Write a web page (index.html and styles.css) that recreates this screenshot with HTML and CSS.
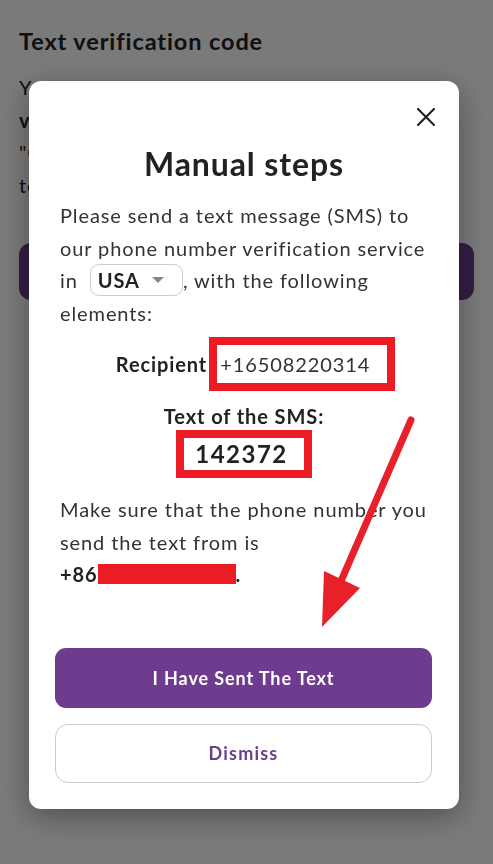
FILE: index.html
```html
<!DOCTYPE html>
<html lang="en">

<head>
    <meta charset="UTF-8">
    <meta name="viewport" content="width=device-width, initial-scale=1.0">
    <title>Manual steps</title>
    <link rel="stylesheet" href="styles.css">
</head>

<body>

    <div class="page">
        <h2>Text verification code</h2>
        <p>You will now need to send a text to<br><b>verify your phone number</b>. Tap<br>"Get manual steps" and send it<br>to our service.</p>
        <button class="page-btn">Get manual steps</button>
    </div>

    <div class="overlay">
        <div class="modal">
            <button class="close" aria-label="Close">
                <svg width="18" height="18" viewBox="0 0 18 18">
                    <path d="M1 1 L17 17 M17 1 L1 17" stroke="#222" stroke-width="2.2" stroke-linecap="round" />
                </svg>
            </button>

            <h1>Manual steps</h1>

            <p class="intro">Please send a text message (SMS) to our phone number verification service in
                <span class="select">USA<span class="caret"></span></span>, with the following elements:</p>

            <div class="recipient">
                <b>Recipient</b><span class="mark number">+16508220314</span>
            </div>

            <div class="sms">
                <b>Text of the SMS:</b>
                <span class="mark code">142372</span>
            </div>

            <p class="from">Make sure that the phone number you send the text from is
                <b class="phone">+86<span class="redact"></span>.</b></p>

            <div class="actions">
                <button class="btn primary">I Have Sent The Text</button>
                <button class="btn secondary">Dismiss</button>
            </div>
        </div>
    </div>

    <!-- annotation arrow drawn over the screenshot -->
    <svg class="arrow" width="493" height="864" viewBox="0 0 493 864">
        <line x1="411" y1="420" x2="338" y2="588" stroke="#e8202a" stroke-width="7" stroke-linecap="round" />
        <polygon points="322,627 324,571 360,588" fill="#e8202a" />
    </svg>

</body>

</html>
```

FILE: styles.css
```css
body {
    font-family: Lato, "Open Sans", sans-serif;
    letter-spacing: 0.9px;
    background-color: #fff;
    color: #222;
    margin: 0;
    padding: 0;
    width: 493px;
    height: 864px;
    overflow: hidden;
}

.page {
    padding: 26px 19px;
}

.page h2 {
    font-size: 23.5px;
    line-height: 30px;
    margin: 0 0 15px;
}

.page p {
    font-size: 20px;
    line-height: 32.5px;
    margin: 0 0 42px;
    white-space: nowrap;
}

.page-btn {
    width: 100%;
    height: 57px;
    border: none;
    border-radius: 12px;
    background-color: #6f3b8e;
    color: #fff;
    font-family: inherit;
    font-size: 18px;
}

.overlay {
    position: fixed;
    top: 0;
    left: 0;
    right: 0;
    bottom: 0;
    background-color: rgba(0, 0, 0, 0.52);
    padding: 81px 34px 0 29px;
}

.modal {
    position: relative;
    background-color: #fff;
    border-radius: 12px;
    padding: 63px 31px 26px;
    box-shadow: 0 8px 30px rgba(0, 0, 0, 0.35);
    text-align: center;
}

.close {
    position: absolute;
    top: 27px;
    right: 24px;
    background: none;
    border: none;
    padding: 0;
    width: 18px;
    height: 18px;
}

.modal h1 {
    font-size: 32px;
    line-height: 40px;
    margin: 0 0 15px;
    color: #222;
}

.intro,
.from {
    font-size: 20px;
    line-height: 32.5px;
    margin: 0;
    text-align: left;
    color: #333;
}

.select {
    display: inline-flex;
    align-items: center;
    gap: 12px;
    border: 1px solid #ccc;
    border-radius: 9px;
    padding: 0 18px 0 7px;
    height: 32px;
    box-sizing: border-box;
    font-weight: 700;
    color: #222;
    margin-left: 6px;
}

.caret {
    width: 0;
    height: 0;
    border-left: 6px solid transparent;
    border-right: 6px solid transparent;
    border-top: 6px solid #888;
}

.recipient {
    margin-top: 8px;
    margin-left: 23px;
    font-size: 20px;
    display: flex;
    justify-content: center;
    align-items: center;
    color: #222;
}

.mark {
    border: 8px solid #ec1c24;
    display: inline-block;
}

.number {
    line-height: 38px;
    padding: 0 17px 0 3px;
    margin-left: 2px;
    color: #333;
}

.sms {
    margin-top: 11px;
    font-size: 20px;
    line-height: 28px;
    display: flex;
    flex-direction: column;
    align-items: center;
    color: #222;
}

.code {
    font-size: 24px;
    line-height: 32px;
    font-weight: 700;
    letter-spacing: 1.5px;
    padding: 0 16px 0 11px;
}

.from {
    margin-top: 15px;
}

.phone {
    color: #222;
    white-space: nowrap;
}

.redact {
    display: inline-block;
    width: 138px;
    height: 20px;
    background-color: #ec1c24;
    vertical-align: -2px;
}

.actions {
    margin-top: 57px;
    display: flex;
    flex-direction: column;
    gap: 16px;
    margin-left: -5px;
    margin-right: -4px;
}

.btn {
    height: 60px;
    border-radius: 11px;
    font-family: inherit;
    font-size: 18px;
    font-weight: 700;
    letter-spacing: 0.9px;
}

.primary {
    background-color: #6f3b8e;
    border: none;
    color: #fff;
}

.secondary {
    background-color: #fff;
    border: 1.5px solid #ccc;
    border-radius: 13px;
    color: #6b3f8c;
    height: 59px;
    letter-spacing: 1.2px;
}

.arrow {
    position: fixed;
    top: 0;
    left: 0;
    pointer-events: none;
}
```
